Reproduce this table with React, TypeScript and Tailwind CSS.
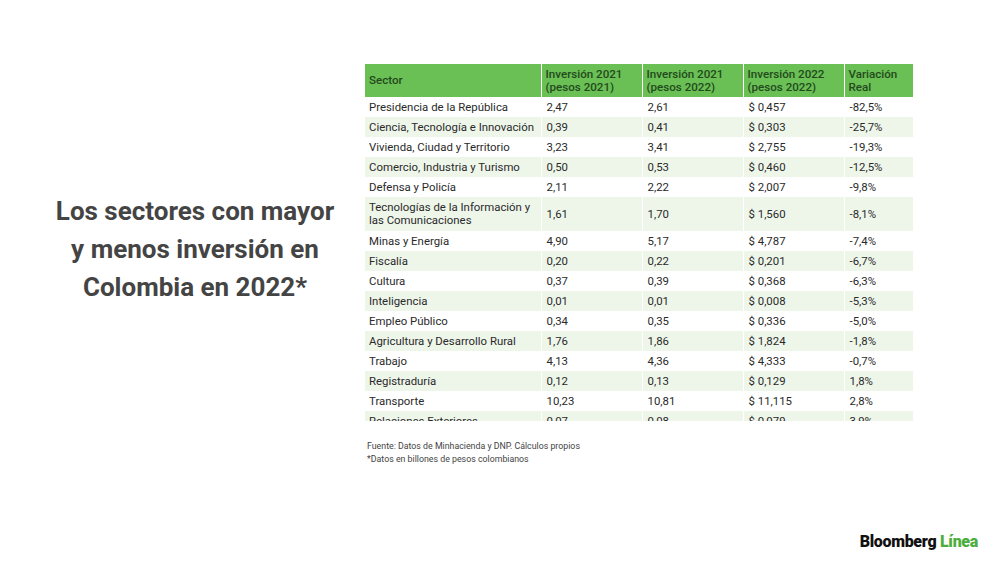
import React from 'react';

interface Row {
  sector: string;
  a: string;
  b: string;
  c: string;
  v: string;
}

const rows: Row[] = [
  { sector: 'Presidencia de la República', a: '2,47', b: '2,61', c: '$ 0,457', v: '-82,5%' },
  { sector: 'Ciencia, Tecnología e Innovación', a: '0,39', b: '0,41', c: '$ 0,303', v: '-25,7%' },
  { sector: 'Vivienda, Ciudad y Territorio', a: '3,23', b: '3,41', c: '$ 2,755', v: '-19,3%' },
  { sector: 'Comercio, Industria y Turismo', a: '0,50', b: '0,53', c: '$ 0,460', v: '-12,5%' },
  { sector: 'Defensa y Policía', a: '2,11', b: '2,22', c: '$ 2,007', v: '-9,8%' },
  { sector: 'Tecnologías de la Información y las Comunicaciones', a: '1,61', b: '1,70', c: '$ 1,560', v: '-8,1%' },
  { sector: 'Minas y Energía', a: '4,90', b: '5,17', c: '$ 4,787', v: '-7,4%' },
  { sector: 'Fiscalía', a: '0,20', b: '0,22', c: '$ 0,201', v: '-6,7%' },
  { sector: 'Cultura', a: '0,37', b: '0,39', c: '$ 0,368', v: '-6,3%' },
  { sector: 'Inteligencia', a: '0,01', b: '0,01', c: '$ 0,008', v: '-5,3%' },
  { sector: 'Empleo Público', a: '0,34', b: '0,35', c: '$ 0,336', v: '-5,0%' },
  { sector: 'Agricultura y Desarrollo Rural', a: '1,76', b: '1,86', c: '$ 1,824', v: '-1,8%' },
  { sector: 'Trabajo', a: '4,13', b: '4,36', c: '$ 4,333', v: '-0,7%' },
  { sector: 'Registraduría', a: '0,12', b: '0,13', c: '$ 0,129', v: '1,8%' },
  { sector: 'Transporte', a: '10,23', b: '10,81', c: '$ 11,115', v: '2,8%' },
  { sector: 'Relaciones Exteriores', a: '0,07', b: '0,08', c: '$ 0,079', v: '3,9%' },
];

const headers = [
  'Sector',
  'Inversión 2021 (pesos 2021)',
  'Inversión 2021 (pesos 2022)',
  'Inversión 2022 (pesos 2022)',
  'Variación Real',
];

export default function App() {
  return (
    <div
      className="w-[1000px] h-[562px] bg-white flex text-[#2a2a2a]"
      style={{ fontFamily: 'Roboto, "Noto Sans", Arial, sans-serif' }}
    >
      <div className="w-[365px] pl-[25px] pt-[192px]">
        <h1 className="text-center text-[26px] leading-[38px] font-bold text-[#444]">
          Los sectores con mayor
          <br />y menos inversión en
          <br />Colombia en 2022*
        </h1>
      </div>

      <div className="flex-1 flex flex-col pt-[64px]">
        {/* the source image cuts the table off mid-row */}
        <div className="w-[548px] h-[357px] overflow-hidden">
          <table className="w-full border-collapse table-fixed text-[11.4px] leading-[13px]">
            <colgroup>
              <col className="w-[176px]" />
              <col className="w-[101px]" />
              <col className="w-[101px]" />
              <col className="w-[101px]" />
              <col className="w-[69px]" />
            </colgroup>
            <thead>
              <tr className="h-[33px] bg-[#6abf55]">
                {headers.map((h) => (
                  <th
                    key={h}
                    className="text-left align-middle font-medium text-[11.6px] text-[#234a1c] px-[4px] border-l border-white first:border-l-0"
                  >
                    {h}
                  </th>
                ))}
              </tr>
            </thead>
            <tbody>
              {rows.map((r, i) => (
                <tr
                  key={r.sector}
                  className={
                    (i % 2 === 1 ? 'bg-[#eef6ea] ' : 'bg-white ') +
                    (r.sector.length > 34 ? 'h-[34px]' : 'h-[20px]')
                  }
                >
                  <td className="px-[4px] align-middle">{r.sector}</td>
                  <td className="px-[5px] align-middle border-l border-white">{r.a}</td>
                  <td className="px-[5px] align-middle border-l border-white">{r.b}</td>
                  <td className="px-[5px] align-middle border-l border-white">{r.c}</td>
                  <td className="px-[5px] align-middle border-l border-white">{r.v}</td>
                </tr>
              ))}
            </tbody>
          </table>
        </div>

        <div className="mt-[19px] pl-[2px] text-[8.8px] leading-[13px] text-[#444]">
          <p>Fuente: Datos de Minhacienda y DNP. Cálculos propios</p>
          <p>*Datos en billones de pesos colombianos</p>
        </div>

        <div className="mt-auto mb-[12px] mr-[22px] self-end text-[16px] font-black tracking-[-0.3px] leading-none">
          <span className="text-[#111]">Bloomberg</span>{' '}
          <span className="text-[#4cae3c]">Línea</span>
        </div>
      </div>
    </div>
  );
}
